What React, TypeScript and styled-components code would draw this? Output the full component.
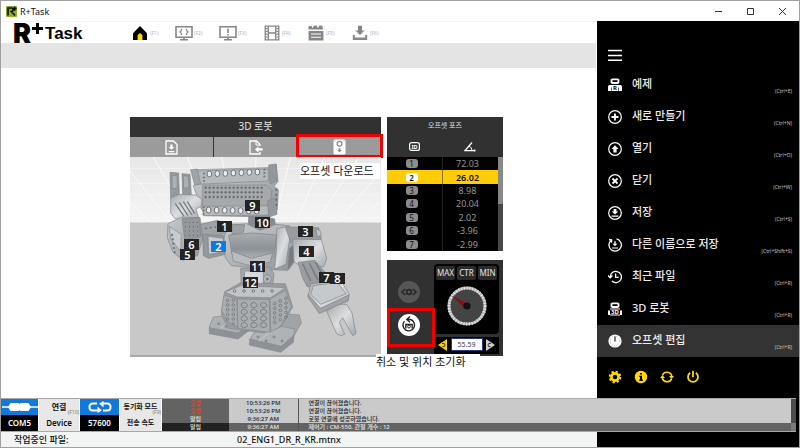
import React from "react";
import styled, { createGlobalStyle, css } from "styled-components";

const Global = createGlobalStyle`
  * { box-sizing: border-box; }
  body { margin: 0; background: #fff; font-family: "Noto Sans", "Noto Sans CJK KR", sans-serif; color: #111; }
  button { border: 0; padding: 0; margin: 0; background: none; font: inherit; color: inherit; cursor: pointer; }
  svg { display: block; }
`;

/* ---------- window frame ---------- */
const Window = styled.div`
  min-height: 100vh;
  display: flex;
  flex-direction: column;
  border: 1px solid #a0a0a0;
  background: #fff;
`;
const TitleBar = styled.header`
  height: 20px;
  display: flex;
  align-items: center;
  gap: 3px;
  padding: 0 8px 0 5px;
  font-size: 9px;
`;
const WindowTitle = styled.span`
  flex: 1;
`;
const WindowButtons = styled.div`
  display: flex;
  gap: 15px;
`;
const WindowButton = styled.button`
  width: 17px;
  display: flex;
  justify-content: center;
`;
const Body = styled.div`
  flex: 1;
  display: grid;
  grid-template-columns: 1fr 202px;
`;
const Main = styled.main`
  display: flex;
  flex-direction: column;
  border-top: 1px solid #f4f4f4;
`;

/* ---------- header ---------- */
const Header = styled.div`
  height: 21px;
  display: flex;
  align-items: center;
  padding-left: 12px;
`;
const Brand = styled.h1`
  margin: 0;
  width: 118px;
  display: flex;
  align-items: center;
  color: #000;
  font: bold 17px/22px "Liberation Sans", sans-serif;
`;
const BrandInitial = styled.span`
  padding-top: 3px;
  font: 900 27px/22px Inter, sans-serif;
`;
const BrandPlus = styled.svg`
  margin: 0 2px 8px 1px;
`;
const BrandWord = styled.span`
  padding-top: 2px;
`;
const Nav = styled.nav`
  display: flex;
`;
const NavButton = styled.button`
  width: 44px;
  display: grid;
  grid-template-columns: 18px 1fr;
  align-items: center;
  justify-items: center;
  text-align: left;
  color: #868686;
`;
const NavKey = styled.span`
  justify-self: start;
  padding-left: 1px;
  font-size: 5px;
  color: #b4b4b4;
`;
const Band = styled.div`
  height: 25px;
  margin-right: 1px;
  background: #e4e4e4;
`;

/* ---------- workspace ---------- */
const Workspace = styled.div`
  display: grid;
  grid-template-columns: 251px 116px;
  gap: 6px;
  padding: 49px 0 0 129px;
`;
const RobotPanel = styled.section`
  display: flex;
  flex-direction: column;
`;
const PanelTitle = styled.h2`
  margin: 0;
  height: 20px;
  background: #313131;
  color: #e4e4e4;
  font-size: 10px;
  line-height: 18px;
  font-weight: 400;
  text-align: center;
`;
const Tools = styled.div`
  display: grid;
  grid-template-columns: repeat(3, 1fr);
  gap: 1px;
  height: 20px;
  background: #333;
`;
const redFrame = css`
  position: relative;
  &::after {
    content: "";
    position: absolute;
    inset: -3px -2px -1px -2px;
    border: 3px solid #f10000;
  }
`;
const ToolButton = styled.button<{ $marked?: boolean }>`
  display: flex;
  align-items: center;
  justify-content: center;
  background: #9b9b9b;
  color: #fff;
  ${(p) => p.$marked && redFrame}
`;
const Viewport = styled.div`
  position: relative;
  height: 200px;
  border-bottom: 2px solid #a9a9a9;
  background: #c8c8c8;
`;
const Pin = styled.button<{ $x: number; $y: number; $active?: boolean }>`
  position: absolute;
  left: ${(p) => p.$x}px;
  top: ${(p) => p.$y}px;
  width: 15px;
  height: 11px;
  background: ${(p) => (p.$active ? "#1279dc" : "#242424")};
  color: #fff;
  font: 600 11px/11px "Noto Sans", sans-serif;
  text-align: center;
`;
const Note = styled.p<{ $x: number; $y: number; $w: number }>`
  position: absolute;
  left: ${(p) => p.$x}px;
  top: ${(p) => p.$y}px;
  width: ${(p) => p.$w}px;
  margin: 0;
  background: #fff;
  color: #111;
  font-size: 11px;
  line-height: 16px;
  white-space: nowrap;
`;
const SideColumn = styled.div`
  display: flex;
  flex-direction: column;
  gap: 9px;
`;
const PosePanel = styled.section`
  background: #313131;
`;
const PoseTitle = styled.h2`
  margin: 0;
  height: 19px;
  color: #e0e0e0;
  font-size: 7px;
  line-height: 17px;
  font-weight: 400;
  text-align: center;
`;
const PoseBody = styled.div`
  display: grid;
  grid-template-columns: 1fr 5px;
`;
const PoseTable = styled.table`
  width: 100%;
  height: 115px;
  border-collapse: collapse;
  table-layout: fixed;
  background: #000;
  color: #979797;
  font-size: 9px;
  line-height: 13px;
  text-align: center;
  th { padding: 0; }
  td { padding: 0 6px 0 0; }
`;
const PoseHead = styled.th`
  height: 21px;
  background: #313131;
  color: #fff;
  svg { margin: 0 auto; }
`;
const PoseRow = styled.tr<{ $active?: boolean }>`
  background: ${(p) => (p.$active ? "#ffcc05" : "#000")};
  color: ${(p) => (p.$active ? "#111" : "#979797")};
  font-weight: ${(p) => (p.$active ? 600 : 400)};
  td + td { border-left: 1px solid ${(p) => (p.$active ? "#8a7212" : "#222")}; }
`;
const IdBadge = styled.span<{ $active?: boolean }>`
  display: block;
  width: 12px;
  margin: 0 auto;
  border-radius: 3px;
  background: ${(p) => (p.$active ? "#fff" : "#8c8c8c")};
  color: #111;
  font-size: 8px;
  line-height: 9px;
`;
const PoseScroll = styled.div`
  margin-top: 21px;
  background: #484848;
`;
const PoseThumb = styled.div`
  height: 47px;
  background: #888;
`;
const DialPanel = styled.section`
  position: relative;
  display: grid;
  grid-template-columns: 43px 1fr;
  gap: 4px;
  height: 96px;
  padding: 4px 4px 2px 0;
  background: #313131;
`;
const DialActions = styled.div`
  display: flex;
  flex-direction: column;
  align-items: center;
  padding-top: 17px;
  gap: 11px;
`;
const RoundButton = styled.button`
  width: 22px;
  height: 22px;
`;
const ResetFrame = styled.div`
  position: relative;
  height: 22px;
  &::after {
    content: "";
    position: absolute;
    inset: -6px -15px -11px -11px;
    border: 3px solid #f10000;
    pointer-events: none;
  }
`;
const DialSide = styled.div`
  display: flex;
  flex-direction: column;
  justify-content: space-between;
`;
const DialBox = styled.div`
  height: 70px;
  padding: 2px;
  border-radius: 4px;
  background: #000;
  > svg { margin: 8px auto 0; }
  > svg { margin-top: 6px; }
`;
const Presets = styled.div`
  display: grid;
  grid-template-columns: repeat(3, 1fr);
  gap: 2px;
`;
const Preset = styled.button`
  height: 14px;
  border-radius: 2px;
  background: #2b2b2b;
  color: #e6e6e6;
  font-size: 8px;
  line-height: 14px;
`;
const ValueRow = styled.div`
  display: flex;
  align-items: center;
  justify-content: space-between;
  height: 17px;
  padding: 0 4px 2px;
  background: #000;
`;
const ValueInput = styled.input`
  width: 32px;
  height: 13px;
  padding: 0;
  border: 1px solid #27357c;
  background: #fff;
  color: #2e3b63;
  font: 7px/11px "Noto Sans", sans-serif;
  text-align: center;
`;

/* ---------- side menu ---------- */
const Sidebar = styled.aside`
  display: flex;
  flex-direction: column;
  background: #000;
  color: #fff;
`;
const MenuToggle = styled.button`
  height: 48px;
  padding: 27px 0 0 11px;
  display: flex;
`;
const MenuItem = styled.button<{ $active?: boolean }>`
  height: 32px;
  display: grid;
  grid-template-columns: 14px 1fr auto;
  gap: 10px;
  align-items: center;
  padding: 0 7px 0 11px;
  background: ${(p) => (p.$active ? "#333" : "#000")};
  text-align: left;
`;
const MenuLabel = styled.span`
  font-size: 11px;
  line-height: 16px;
  padding-bottom: 3px;
  font-weight: 500;
  color: #ececec;
  white-space: nowrap;
`;
const MenuKey = styled.kbd`
  padding-top: 12px;
  font: 5px/8px "Noto Sans", sans-serif;
  color: #c4c4c4;
`;
const QuickRow = styled.div`
  display: flex;
  gap: 12px;
  padding: 13px 0 0 11px;
  color: #ffd900;
`;

/* ---------- status strip and footer ---------- */
const StatusBack = styled.div`
  padding-right: 3px;
  background: #000;
`;
const Status = styled.div`
  display: grid;
  grid-template-columns: 37px 40px 39px 41px 1fr;
  gap: 1px;
  border-top: 1px solid #a8a8a8;
  border-bottom: 1px solid #a8a8a8;
  background: #fff;
`;
const StatusCell = styled.div`
  display: grid;
  grid-template-rows: 16px 16px;
`;
const StatusButton = styled.button<{ $tone: "blue" | "black" | "light" }>`
  position: relative;
  display: flex;
  align-items: center;
  justify-content: center;
  background: ${(p) => ({ blue: "#1279dc", black: "#000", light: "#e7e7e7" })[p.$tone]};
  color: ${(p) => (p.$tone === "light" ? "#111" : "#fff")};
  font-weight: 600;
  font-size: 8px;
  line-height: 16px;
  white-space: nowrap;
`;
const SmallText = styled.span`
  font-size: 7px;
`;
const StatusKey = styled.kbd`
  position: absolute;
  right: 0;
  bottom: 0;
  font: 5px/5px "Noto Sans", sans-serif;
  color: #777;
`;
const LogArea = styled.div`
  display: grid;
  grid-template-columns: 1fr 5px;
`;
const Log = styled.table`
  width: 100%;
  height: 32px;
  border-collapse: collapse;
  table-layout: fixed;
  background: #cacaca;
  color: #222;
  font-size: 6px;
  line-height: 8px;
  font-weight: 500;
  td { padding: 0; white-space: nowrap; }
`;
const LogRow = styled.tr<{ $selected?: boolean }>`
  background: ${(p) => (p.$selected ? "#636363" : "#cacaca")};
  color: ${(p) => (p.$selected ? "#e8e8e8" : "#222")};
`;
const LogKind = styled.td<{ $error?: boolean; $selected?: boolean }>`
  width: 67px;
  background: ${(p) => (p.$selected ? "#222" : "#636363")};
  color: ${(p) => (p.$error ? "#f0441c" : "#e8e8e8")};
  text-align: center;
`;
const LogTime = styled.td`
  width: 69px;
  border-right: 1px solid #555;
  text-align: center;
`;
const LogText = styled.td`
  && { padding-left: 10px; }
`;
const LogScroll = styled.div`
  background: #4c4c4c;
  border-bottom: 8px solid #7a7a7a;
`;
const Footer = styled.footer`
  display: grid;
  grid-template-columns: 223px 1fr 202px;
  height: 15px;
  background: #f3f5f4;
  font-size: 9px;
  line-height: 15px;
  font-weight: 500;
  padding-left: 13px;
`;
const FooterEnd = styled.div`
  background: #000;
`;

/* ---------- icons ---------- */
type Name =
  | "examples" | "new" | "open" | "close" | "save" | "saveAs" | "recent" | "robot" | "offset";

const RobotHead = ({ tag }: { tag: string }) => (
  <>
    <path d="M4 .6h6l1.4 1v3.2L10 6H4L2.600 4.800V1.600z" fill="#fff" />
    <path d="M4.500 2.200h5v1.800h-5z" fill="#000" />
    {tag === "3D" ? (
      <>
        <path d="M2 6.600h10v1H2zM0 8.500h2V13H0zM12 8.500h2V13h-2zM2 12.600h10v1H2z" fill="#fff" />
        <text x="7" y="12.400" fontSize="6" fontWeight="700" fill="#fff" textAnchor="middle" fontFamily="Noto Sans">3D</text>
      </>
    ) : (
      <>
        <path d="M1 7h12l1 1.500V13h-3.200V9.500h-.6V13H3.800V9.500h-.6V13H0V8.500z" fill="#fff" />
        <text x="7" y="12.400" fontSize="6" fontWeight="700" fill="#000" textAnchor="middle" fontFamily="Noto Sans">R</text>
      </>
    )}
  </>
);

const MenuIcon = ({ name }: { name: Name }) => {
  const ring = <circle cx="7" cy="7" r="6.3" />;
  const art: Record<Name, React.ReactNode> = {
    examples: <RobotHead tag="R" />,
    robot: <RobotHead tag="3D" />,
    new: <g stroke="#fff" fill="none" strokeWidth="1.2">{ring}<path d="M7 3.5v7M3.5 7h7" strokeWidth="1.8" /></g>,
    open: <g stroke="#fff" fill="none" strokeWidth="1.2">{ring}<path d="M7 3.2L10.4 7H8.6v3.4H5.4V7H3.6z" fill="#fff" stroke="none" /></g>,
    close: <g stroke="#fff" fill="none" strokeWidth="1.2">{ring}<path d="M4.5 4.5l5 5M9.5 4.5l-5 5" strokeWidth="1.8" /></g>,
    save: <g stroke="#fff" fill="none" strokeWidth="1.2">{ring}<path d="M5.6 3h2.8v2.6h1.8L7 8.6 3.8 5.6h1.8zM3.6 9.4h6.8v1.3H3.6z" fill="#fff" stroke="none" /></g>,
    saveAs: <g stroke="#fff" fill="none" strokeWidth="1.3"><path d="M8.5 .9a6.2 6.2 0 1 1-5.6 1.5M1 1.6l2.6.2-.2 2.8" /><path d="M6.3 3.2h1.4v2.6h1.7L7 8.2 4.6 5.8h1.7zM4 9.4h6v1.1H4z" fill="#fff" stroke="none" /></g>,
    recent: <g stroke="#fff" fill="none" strokeWidth="1.3"><path d="M2.2 7a5.6 5.6 0 1 1 1.7 4M0 5.5l2.2 2.4 2.2-2.4M7.6 3.6v3.8h3" /></g>,
    offset: <><circle cx="7" cy="7" r="6.6" fill="#fff" /><circle cx="7" cy="7" r="4.8" fill="none" stroke="#888" strokeWidth=".8" strokeDasharray=".7 1.2" /><path d="M7 2.4v5.2" stroke="#222" strokeWidth="1.2" /></>,
  };
  return <svg width="14" height="14" viewBox="0 0 14 14">{art[name]}</svg>;
};

const navIcons: React.ReactNode[] = [
  <svg width="16" height="16" viewBox="0 0 16 16"><path d="M1 8.200L8 1l7 7.200V15H1z" fill="#000" /><path d="M5.600 15v-5l2.400-2 2.400 2v5z" fill="#ffd900" /></svg>,
  <svg width="18" height="16" viewBox="0 0 18 16" fill="none" stroke="currentColor"><path d="M1 1.8h16v10.4H1z" strokeWidth="1.6" /><path d="M5 14.8h8M9 12v3" strokeWidth="1.6" /><path d="M7.200 4.200c-1.400 0-.6 2.300-2 2.800 1.400.5.6 2.800 2 2.800M10.800 4.200c1.400 0 .6 2.300 2 2.800-1.400.5-.6 2.800-2 2.800" strokeWidth="1.300" /></svg>,
  <svg width="18" height="16" viewBox="0 0 18 16" fill="none" stroke="currentColor"><path d="M1 1.8h16v10.4H1z" strokeWidth="1.6" /><path d="M5 14.8h8M9 12v3" strokeWidth="1.6" /><path d="M9 3.6v4.400M9 8.900v1.500" strokeWidth="1.600" /></svg>,
  <svg width="16" height="16" viewBox="0 0 16 16" fill="none" stroke="currentColor"><path d="M1.2 1.2h13.6v13.6H1.2zM4.3 1v14M11.7 1v14M4.3 8h7.4" strokeWidth="1.3" /><path d="M2.7 3v11M13.3 3v11" strokeDasharray="1.2 1.6" strokeWidth="2.2" /></svg>,
  <svg width="16" height="16" viewBox="0 0 16 16"><path d="M.6 6h14.8v9.4H.6zM.4 1.2l3-.4 1.4 2.4 1-2.4 3-.2 1 2.6 1.4-2.4 3-.2 1 3.8H.6z" fill="currentColor" /><path d="M3 9h10M3 12.2h10" stroke="#fff" strokeWidth="1.1" /></svg>,
  <svg width="16" height="16" viewBox="0 0 16 16" fill="currentColor"><path d="M6 .8h4v4.6h2.6L8 10 3.4 5.4H6z" /><path d="M.8 10h2v2.6h10.4V10h2v5H.8z" /></svg>,
];

const toolIcons: React.ReactNode[] = [
  <svg width="13" height="15" viewBox="0 0 13 15" fill="none" stroke="currentColor"><path d="M1 1h7.5L12 4.5V14H1z" strokeWidth="1.3" /><path d="M5.3 4.5h2.4V7h1.6l-2.8 2.8L3.7 7h1.6zM3.6 11h5.8v1.3H3.6z" fill="currentColor" stroke="none" /></svg>,
  <svg width="14" height="15" viewBox="0 0 14 15" fill="none" stroke="currentColor"><path d="M11 6V4.5L7.5 1H1v13h10v-2" strokeWidth="1.3" /><path d="M7 1v4h4" /><path d="M6 9.400L9.500 6.300v2H13.600v2.300H9.500v2z" fill="currentColor" stroke="none" /></svg>,
  <svg width="13" height="16" viewBox="0 0 13 16"><rect x=".5" y=".5" width="12" height="15" rx="1.5" fill="#fff" /><circle cx="6.5" cy="4.8" r="2.4" fill="none" stroke="#888" strokeWidth="1.2" /><path d="M5.7 9h1.6v2h1.4l-2.2 2.4L4.3 11h1.4z" fill="#888" /><path d="M1.5 2h1M10.5 2h1" stroke="#999" /></svg>,
];

/* ---------- robot scene ---------- */
const range = (n: number) => Array.from({ length: n }, (_, i) => i);

const RobotScene = () => (
  <svg width="100%" height="198" viewBox="-90 6 753 594" preserveAspectRatio="none">
    <defs>
      <linearGradient id="sky" x1="0" y1="0" x2="0" y2="1">
        <stop offset="0" stopColor="#e7e7e7" /><stop offset="1" stopColor="#f5f5f5" />
      </linearGradient>
      <linearGradient id="metal" x1="0" y1="0" x2="1" y2="1">
        <stop offset="0" stopColor="#c6cacd" /><stop offset=".5" stopColor="#b0b4b7" /><stop offset="1" stopColor="#909498" />
      </linearGradient>
      <linearGradient id="chest" x1="0" y1="0" x2="0" y2="1">
        <stop offset="0" stopColor="#a9adb1" /><stop offset=".55" stopColor="#8d9296" /><stop offset="1" stopColor="#b9bdc0" />
      </linearGradient>
      <linearGradient id="bright" x1="0" y1="0" x2="1" y2="1">
        <stop offset="0" stopColor="#a7abae" /><stop offset=".5" stopColor="#dcdee0" /><stop offset="1" stopColor="#a2a6aa" />
      </linearGradient>
    </defs>
    <rect x="-90" y="6" width="753" height="197" fill="url(#sky)" />
    <g stroke="#fafafa" strokeWidth="3">
      {range(13).map((i) => <path key={i} d={`M${-90 + i * 62} 203L${-330 + i * 103} 6`} />)}
      <path d="M-90 40H663M-90 85H663M-90 120H663M-90 150H663" strokeWidth="1.5" />
    </g>
    <rect x="-90" y="203" width="753" height="397" fill="#c8c8c8" />
    <g stroke="#83878b" strokeWidth="2" strokeLinejoin="round">
      {/* back plate */}
      <path d="M108 44L325 38l24-10 5 52-12 14 13 10-3 60-24 22-190-4-14-20-24-70 17-6z" fill="url(#metal)" />
      <path d="M128 90h190l18 14-8 58-200-8z" fill="#a5a9ac" />
      <path d="M112 48l212-6 2 36-214 10zM128 154l196-2 2 28-196 2z" fill="#b5b9bc" />
      <path d="M326 30l22-3 4 50-22 10zM322 138l26-10 3 50-24 8z" fill="#94989c" />
      <path d="M92 44l20-2 10 44-18 4z" fill="#a0a4a7" />
    </g>
    <g fill="#ececec" stroke="#6f7478" strokeWidth="3">
      {range(7).map((i) => <ellipse key={i} cx={148 + i * 24} cy={57 - i} rx="7" ry="9" />)}
      {range(7).map((i) => <ellipse key={i} cx={146 + i * 24} cy={165 + i / 2} rx="7" ry="9" />)}
    </g>
    <g fill="#686d71" stroke="#c4c7c9">
      {range(3).map((r) => range(15).map((i) => <circle key={`${r}-${i}`} cx={137 + i * 12} cy={98 + r * 14} r="4.6" />))}
      {range(3).map((i) => <circle key={i} cx="132" cy={56 + i * 11} r="3.5" />)}
      {range(3).map((i) => <circle key={i} cx="313" cy={44 + i * 10} r="3.5" />)}
      {range(3).map((i) => <circle key={i} cx="131" cy={157 + i * 10} r="3.5" />)}
      {range(4).map((i) => <circle key={i} cx={349} cy={104 + i * 15} r="4.5" />)}
    </g>
    {/* raised arm */}
    <g stroke="#7f8488" strokeWidth="2" strokeLinejoin="round">
      <path d="M30 52l26 2 2 66-26 10zM66 56l24 2 4 62-26 2z" fill="#969a9e" />
      <path d="M36 60l15 2 1 36-16 4zM70 62l15 2 2 34-16 2z" fill="#adb1b4" />
      <path d="M32 128l26-10 50 2 18 14-2 20-16 8 8 26-70 4-14-18z" fill="url(#bright)" />
      <path d="M46 146l26 38M58 142l26 40M70 140l26 40M82 140l22 36" stroke="#777c80" strokeWidth="4" />
      <path d="M24 206l42-20 54 2 8 64-16 50-44 14-30-26-16-42z" fill="url(#metal)" />
      <path d="M66 190l52-2 4 58-48 8z" fill="#94989c" />
      <path d="M28 214l36 24-2 50-30-34z" fill="#c9cccf" />
      <path d="M122 208l50-12 36 12 4 24-84 18z" fill="#9fa3a6" />
      <path d="M128 238l66 4 10 54-58 14-16-8z" fill="#94989c" />
      <path d="M144 244l46 6 4 40-48 8z" fill="#c8cbcd" />
    </g>
    <g fill="#6e7377" stroke="#c0c3c5">
      {range(4).map((r) => range(4).map((i) => <circle key={`${r}-${i}`} cx={76 + i * 12} cy={202 + r * 13} r="3.6" />))}
      {range(3).map((i) => <circle key={i} cx={138 + i * 14} cy={220 - i * 2} r="4" />)}
      {range(5).map((i) => <circle key={i} cx={36 + i * 2} cy={240 + i * 13} r="4" />)}
    </g>
    {/* neck, torso and shoulder */}
    <g stroke="#7f8488" strokeWidth="2" strokeLinejoin="round">
      <path d="M266 184l50 2 28 6 4 44-84 4z" fill="#888c90" />
      <path d="M286 188v46M306 188v46M326 192v44" />
      <path d="M204 212l56-6 40 20 48-18 40 4 8 34 14 14-6 60-20 26-60-2-66-8-44-4-18-24-4-60z" fill="url(#metal)" />
      <path d="M206 240l70-6 74 6-8 66-50 14-76-22z" fill="url(#chest)" />
      <path d="M214 288l60 22 64-16-8 28-60 10-50-14z" fill="#b9bdc0" />
      <path d="M350 222l30-8 10 30-12 84-34 14 6-64z" fill="url(#bright)" />
      <path d="M388 280l14-10 4 42-22 30z" fill="#777c80" />
      <path d="M218 208l36 2-4 22-34 6z" fill="#9da1a4" />
      <path d="M376 216l100 2 8 34-92 10z" fill="#999da1" />
      <path d="M398 252l86 2 16 56-8 24-54 10-36-24z" fill="url(#bright)" />
      <path d="M414 322l50-6 36 42-8 30-50 8-14-26z" fill="#999da1" />
      <path d="M428 326l24 52M448 324l26 52M466 322l24 40" stroke="#73787c" strokeWidth="4" />
      <path d="M468 222l12 4 4 14-12 6z" fill="#c0c3c5" />
    </g>
    {/* lowered hand */}
    <g stroke="#7f8488" strokeWidth="2" strokeLinejoin="round">
      <path d="M500 468l30-20 30 0 16 26 12 62-10 6-30-54-10 14 16 36-12 4-12-6z" fill="url(#bright)" />
      <path d="M452 386l92-8 24 40-4 20-84 34-36-46z" fill="url(#bright)" />
      <path d="M444 418l38 42 84-40-2 16-86 40-34-50z" fill="#a0a4a7" />
      <path d="M460 392l72-10 26 34-76 32-30-30z" fill="#c6c9cb" />
    </g>
    {/* waist */}
    <g stroke="#7f8488" strokeWidth="2" strokeLinejoin="round">
      <path d="M242 340l86-4 14 20-6 54-92 2z" fill="#a3a7aa" />
      <path d="M254 348l56 2v56l-58-2z" fill="#d6d9db" />
      <circle cx="322" cy="372" r="12" fill="#b8bbbe" />
      <circle cx="322" cy="372" r="4" fill="#74787c" />
    </g>
    {/* feet */}
    <g stroke="#85898d" strokeWidth="2" strokeLinejoin="round">
      <path d="M160 486l40-4 72 34-38 24-86-16 1-12z" fill="#adb1b4" />
      <path d="M148 518l86 16 36-22-2 14-34 26-86-16z" fill="#8e9296" />
      <path d="M380 476l38 4 6 24-22 38-60-22z" fill="#a0a4a7" />
      <path d="M282 534l40-28 82 16-4 28-38 26-94-22z" fill="#afb3b6" />
      <path d="M270 552l94 22 38-34-2 22-38 30-94-22z" fill="#8e9296" />
      <path d="M182 520l44-28M296 560l44-40" stroke="#d4d6d8" />
    </g>
    {/* leg block */}
    <g stroke="#85898d" strokeWidth="2" strokeLinejoin="round">
      <path d="M194 410l46-26 136 2 10 30 12 40-36 60-52 18-104-14-22-40z" fill="#989ca0" />
      <path d="M194 412l48-20 134 6-44 30-100-2z" fill="#c2c5c8" />
      <path d="M192 420l38 12 2 84-28-16-20-34zM232 432l96 2 2 98-96-12zM330 432l46-26 18 50-34 60-28 14z" fill="#a9adb0" />
    </g>
    <g fill="none" stroke="#7b8084" strokeWidth="3">
      {range(4).map((r) => range(3).map((i) => <path key={`${r}-${i}`} d={`M${244 + i * 29} ${446 + r * 20}q10 -8 16 0t-2 10q-8 6 -14 -2z`} />))}
      {range(5).map((r) => range(2).map((i) => <circle key={`${r}-${i}`} cx={203 + i * 17} cy={436 + r * 14} r="4" />))}
      {range(5).map((r) => range(3).map((i) => <circle key={`${r}-${i}`} cx={344 + i * 17} cy={446 + r * 14 - i * 8} r="4" />))}
      {range(5).map((i) => <circle key={i} cx={224 + i * 28} cy={408} r="4" />)}
      {range(4).map((i) => <circle key={i} cx={294 + i * 24} cy={546 + (i % 2) * 12} r="3" />)}
      {range(3).map((i) => <circle key={i} cx={176 + i * 22} cy={506 + (i % 2) * 8} r="3" />)}
    </g>
  </svg>
);

const pins: [number, number, number][] = [
  [9, 115, 43], [10, 125, 60], [1, 87, 64], [3, 168, 69], [4, 169, 89], [6, 54, 82], [5, 50, 92],
  [2, 81, 84], [11, 120, 104], [12, 113, 120], [7, 189, 115], [8, 200, 116],
];

const poses: [number, string][] = [
  [1, "72.03"], [2, "26.02"], [3, "8.98"], [4, "20.04"], [5, "2.02"], [6, "-3.96"], [7, "-2.99"],
];

const menu: [Name, string, string][] = [
  ["examples", "예제", "(Ctrl+E)"],
  ["new", "새로 만들기", "(Ctrl+N)"],
  ["open", "열기", "(Ctrl+O)"],
  ["close", "닫기", "(Ctrl+W)"],
  ["save", "저장", "(Ctrl+S)"],
  ["saveAs", "다른 이름으로 저장", "(Ctrl+Shift+S)"],
  ["recent", "최근 파일", "(Ctrl+R)"],
  ["robot", "3D 로봇", "(Ctrl+R)"],
  ["offset", "오프셋 편집", "(Ctrl+R)"],
];

const logs: [string, string, string][] = [
  ["오류", "10:53:26 PM", "연결이 끊어졌습니다."],
  ["오류", "10:53:26 PM", "연결이 끊어졌습니다."],
  ["알림", "9:36:27 AM", "로봇 연결에 성공하였습니다."],
  ["알림", "9:36:27 AM", "제어기 : CM-550, 관절 개수 : 12"],
];

const Dial = () => (
  <svg width="40" height="40" viewBox="0 0 40 40">
    <circle cx="20" cy="20" r="18" fill="#444" stroke="#b8b8b8" strokeWidth="3" />
    <circle cx="20" cy="20" r="18" fill="none" stroke="#f2f2f2" strokeWidth="3" strokeDasharray=".8 2" />
    <path d="M18 22.500L4.500 9.500 21.500 18z" fill="#8e0d12" />
    <circle cx="20" cy="20" r="3.600" fill="#111" />
  </svg>
);

export default function App() {
  return (
    <>
      <Global />
      <Window>
        <TitleBar>
          <svg width="11" height="11" viewBox="0 0 11 11">
            <rect width="11" height="11" rx="1" fill="#8fae2c" />
            <path d="M2 9.5V2h3.6q1.6 0 1.4 1.8T5.4 5.6L9 9.5M8.6 .8v4M6.8 2.6h3.8" fill="none" stroke="#111" strokeWidth="1.7" />
          </svg>
          <WindowTitle>R+Task</WindowTitle>
          <WindowButtons>
            <WindowButton aria-label="Minimize"><svg width="7" height="7" stroke="#333"><path d="M0 3.5h7" /></svg></WindowButton>
            <WindowButton aria-label="Maximize"><svg width="7" height="7" stroke="#333" fill="none"><path d="M.5.5h6v6h-6z" /></svg></WindowButton>
            <WindowButton aria-label="Close"><svg width="7" height="7" stroke="#333"><path d="M0 0l7 7M7 0L0 7" /></svg></WindowButton>
          </WindowButtons>
        </TitleBar>

        <Body>
          <Main>
            <Header>
              <Brand>
                <BrandInitial>R</BrandInitial>
                <BrandPlus width="11" height="11" viewBox="0 0 11 11"><path d="M5.5 0v11M0 5.5h11" stroke="#000" strokeWidth="3" /></BrandPlus>
                <BrandWord>Task</BrandWord>
              </Brand>
              <Nav>
                {navIcons.map((icon, i) => (
                  <NavButton key={i} aria-label={`F${i + 1}`}>
                    {icon}
                    <NavKey>(F{i + 1})</NavKey>
                  </NavButton>
                ))}
              </Nav>
            </Header>
            <Band />
            <Workspace>
              <RobotPanel>
                <PanelTitle>3D 로봇</PanelTitle>
                <Tools>
                  <ToolButton aria-label="Save pose">{toolIcons[0]}</ToolButton>
                  <ToolButton aria-label="Load pose">{toolIcons[1]}</ToolButton>
                  <ToolButton aria-label="Download offset" $marked>{toolIcons[2]}</ToolButton>
                </Tools>
                <Viewport>
                  <RobotScene />
                  {pins.map(([id, x, y]) => (
                    <Pin key={id} $x={x} $y={y} $active={id === 2}>{id}</Pin>
                  ))}
                  <Note $x={170} $y={6} $w={80}>오프셋 다운로드</Note>
                </Viewport>
              </RobotPanel>
              <SideColumn>
                <PosePanel>
                  <PoseTitle>오프셋 포즈</PoseTitle>
                  <PoseBody>
                    <PoseTable>
                      <thead>
                        <tr>
                          <PoseHead aria-label="ID">
                            <svg width="11" height="9" viewBox="0 0 11 9"><rect x=".6" y=".6" width="9.8" height="7.8" rx="2" fill="none" stroke="#fff" strokeWidth="1.2" /><text x="5.5" y="6.6" fontSize="5.5" fontWeight="700" fill="#fff" textAnchor="middle" fontFamily="Noto Sans">ID</text></svg>
                          </PoseHead>
                          <PoseHead aria-label="Angle">
                            <svg width="12" height="10" viewBox="0 0 12 10" fill="none" stroke="#fff"><path d="M8 .5L1 8.6h10" strokeWidth="1.3" /><path d="M5 4.2q3 1 3 4.2" /><circle cx="10.6" cy="8.6" r="1" fill="#fff" stroke="none" /></svg>
                          </PoseHead>
                        </tr>
                      </thead>
                      <tbody>
                        {poses.map(([id, angle]) => (
                          <PoseRow key={id} $active={id === 2}>
                            <td><IdBadge $active={id === 2}>{id}</IdBadge></td>
                            <td>{angle}</td>
                          </PoseRow>
                        ))}
                      </tbody>
                    </PoseTable>
                    <PoseScroll><PoseThumb /></PoseScroll>
                  </PoseBody>
                </PosePanel>
                <DialPanel>
                  <DialActions>
                    <RoundButton aria-label="Preview">
                      <svg width="22" height="22" viewBox="0 0 22 22"><circle cx="11" cy="11" r="11" fill="#565656" /><g fill="none" stroke="#292929" strokeWidth="1.6"><path d="M7 8l-3 3 3 3M15 8l3 3-3 3" /><circle cx="11" cy="11" r="2.2" /><path d="M7.5 9.5q3.5-3 7 0M7.5 12.5q3.5 3 7 0" strokeWidth="1" /></g></svg>
                    </RoundButton>
                    <ResetFrame>
                      <RoundButton aria-label="Reset position">
                        <svg width="22" height="22" viewBox="0 0 22 22"><circle cx="11" cy="11" r="11" fill="#fff" /><g fill="none" stroke="#222" strokeWidth="1.4"><path d="M9 5.500h3.500a5.800 5.800 0 1 1-6 1.600M12 2.600L8.800 5.500 12 8.300" /><path d="M7.800 14.500V10.500h6.400v4" strokeWidth="1.300" /><circle cx="11" cy="12.600" r="1.400" strokeWidth="1" /></g></svg>
                      </RoundButton>
                    </ResetFrame>
                  </DialActions>
                  <DialSide>
                    <DialBox>
                      <Presets>
                        <Preset>MAX</Preset>
                        <Preset>CTR</Preset>
                        <Preset>MIN</Preset>
                      </Presets>
                      <Dial />
                    </DialBox>
                    <ValueRow>
                      <button aria-label="Decrease"><svg width="9" height="12" viewBox="0 0 9 12"><path d="M9 0v12L0 6z" fill="#f5cf0a" /><path d="M4 4.5q3-1 3 1.5T4.5 7.5" fill="none" stroke="#333" /></svg></button>
                      <ValueInput aria-label="Offset angle" defaultValue="55.59" />
                      <button aria-label="Increase"><svg width="9" height="12" viewBox="0 0 9 12"><path d="M0 0v12l9-6z" fill="#d0d0d0" /><path d="M5 4.5q-3-1-3 1.5T4.5 7.5" fill="none" stroke="#333" /></svg></button>
                    </ValueRow>
                  </DialSide>
                  <Note $x={-11} $y={94} $w={104}>취소 및 위치 초기화</Note>
                </DialPanel>
              </SideColumn>
            </Workspace>
          </Main>

          <Sidebar>
            <MenuToggle aria-label="Menu">
              <svg width="14" height="13" viewBox="0 0 14 13" stroke="#fff" strokeWidth="1.4"><path d="M0 2.500h14M0 7.500h14M0 12.300h14" /></svg>
            </MenuToggle>
            {menu.map(([icon, label, key]) => (
              <MenuItem key={icon} $active={icon === "offset"}>
                <MenuIcon name={icon} />
                <MenuLabel>{label}</MenuLabel>
                <MenuKey>{key}</MenuKey>
              </MenuItem>
            ))}
            <QuickRow>
              <button aria-label="Settings"><svg width="14" height="14" viewBox="0 0 14 14" fill="none" stroke="currentColor"><circle cx="7" cy="7" r="3.6" strokeWidth="2.6" /><circle cx="7" cy="7" r="5.4" strokeWidth="1.9" strokeDasharray="2.2 2.04" /></svg></button>
              <button aria-label="Information"><svg width="14" height="14" viewBox="0 0 14 14"><circle cx="7" cy="7" r="6.2" fill="currentColor" /><path d="M6 3h2v1.6H6zM5.2 5.8H8v3.8h.8V11H5.2V9.6H6V7h-.8z" fill="#000" /></svg></button>
              <button aria-label="Refresh"><svg width="14" height="14" viewBox="0 0 14 14"><path d="M2.400 5.200A5 5 0 0 1 11.800 6M11.600 8.800A5 5 0 0 1 2.200 8" fill="none" stroke="currentColor" strokeWidth="1.6" /><path d="M9 6h5l-2.500 3zM0 8h5L2.500 5z" fill="currentColor" /></svg></button>
              <button aria-label="Power"><svg width="14" height="14" viewBox="0 0 14 14" fill="none" stroke="currentColor" strokeWidth="1.8"><path d="M4.2 2.8a5 5 0 1 0 5.6 0M7 .8v6.4" /></svg></button>
            </QuickRow>
          </Sidebar>
        </Body>

        <StatusBack>
          <Status>
            <StatusCell>
              <StatusButton $tone="blue" aria-label="Connection">
                <svg width="36" height="10" viewBox="0 0 36 10"><path d="M0 5h36" stroke="#fff" strokeWidth="1.4" /><path d="M6 5l2.500-4h8l1 1 1-1h8L29 5l-2.500 4h-8l-1-1-1 1h-8z" fill="#fff" /></svg>
              </StatusButton>
              <StatusButton $tone="black">COM5</StatusButton>
            </StatusCell>
            <StatusCell>
              <StatusButton $tone="light">연결<StatusKey>(F10)</StatusKey></StatusButton>
              <StatusButton $tone="light">Device</StatusButton>
            </StatusCell>
            <StatusCell>
              <StatusButton $tone="blue" aria-label="Sync">
                <svg width="24" height="12" viewBox="0 0 24 12" fill="none" stroke="#fff" strokeWidth="2"><path d="M9 2.500H5q-3.500 0-3.500 3.500T5 9.500h7M15 9.500h4q3.500 0 3.500-3.500T19 2.500h-5" /><path d="M9.500 5.500l4.500 4-4.500 2.500zM15.500 0l-4.500 2.500 4.500 4z" fill="#fff" stroke="none" /></svg>
              </StatusButton>
              <StatusButton $tone="black">57600</StatusButton>
            </StatusCell>
            <StatusCell>
              <StatusButton $tone="light"><SmallText>동기화 모드</SmallText><StatusKey>(F9)</StatusKey></StatusButton>
              <StatusButton $tone="light"><SmallText>전송 속도</SmallText></StatusButton>
            </StatusCell>
            <LogArea>
              <Log>
                <tbody>
                  {logs.map(([kind, time, text], i) => (
                    <LogRow key={i} $selected={i === 3}>
                      <LogKind $error={i < 2} $selected={i === 3}>{kind}</LogKind>
                      <LogTime>{time}</LogTime>
                      <LogText>{text}</LogText>
                    </LogRow>
                  ))}
                </tbody>
              </Log>
              <LogScroll />
            </LogArea>
          </Status>
        </StatusBack>
        <Footer>
          <span>작업중인 파일:</span>
          <span>02_ENG1_DR_R_KR.mtnx</span>
          <FooterEnd />
        </Footer>
      </Window>
    </>
  );
}
